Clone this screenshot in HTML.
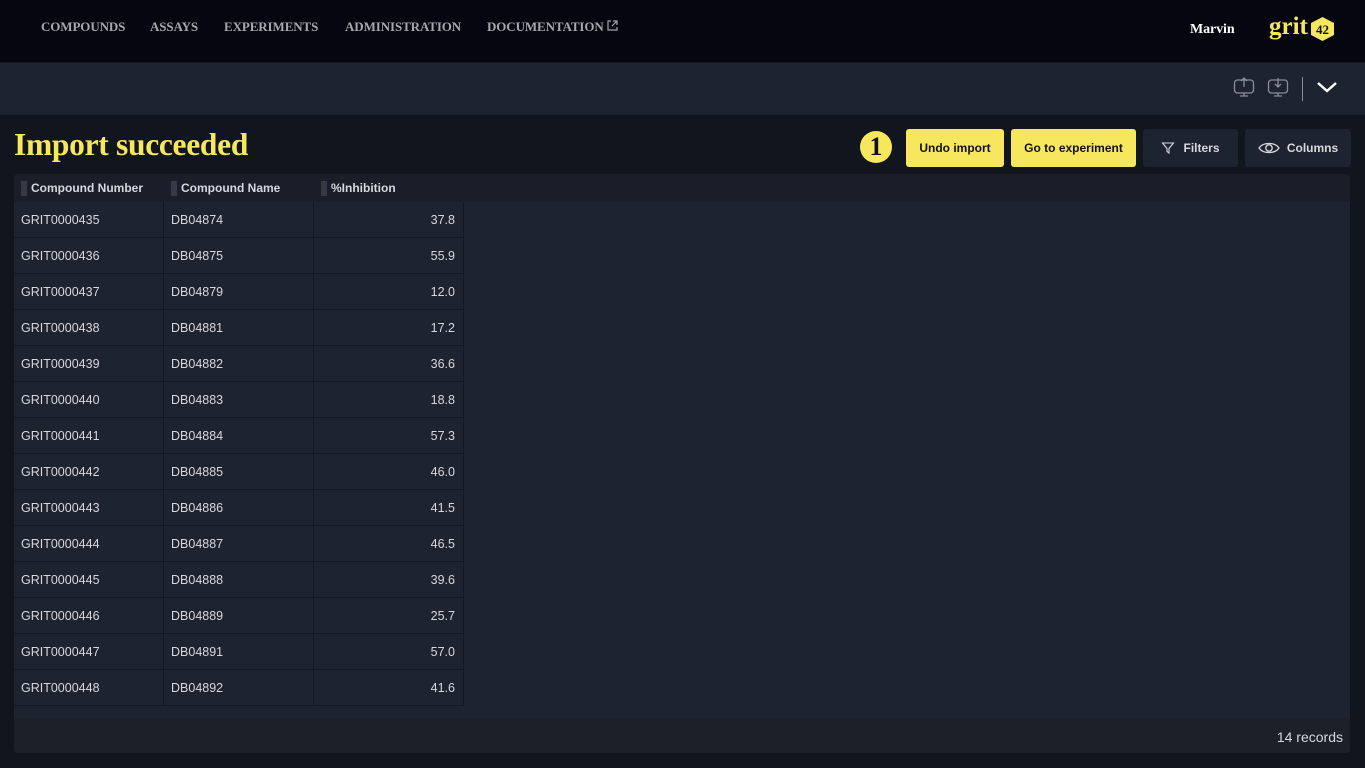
<!DOCTYPE html><html><head><style>
*{box-sizing:border-box;margin:0;padding:0}
body{width:1365px;height:768px;background:#11151d;font-family:"Liberation Sans",sans-serif;overflow:hidden;position:relative}
.top{position:absolute;left:0;top:0;width:1365px;height:62px;background:#05060f}
.nav{position:absolute;top:19px;font-family:"Liberation Serif",serif;font-weight:bold;font-size:13px;color:#a8a8ac;letter-spacing:-0.1px}
.tb{position:absolute;left:0;top:63px;width:1365px;height:52px;background:#1e2330}
.title{position:absolute;left:14px;top:127px;font-family:"Liberation Serif",serif;font-weight:bold;font-size:31.5px;color:#f7e75e;letter-spacing:-0.3px}
.btn{position:absolute;top:129px;height:38px;border-radius:3px;font-size:12px;font-weight:bold;display:flex;align-items:center;justify-content:center}
.y{background:#f7e75e;color:#111}
.d{background:#1e2330;color:#d8d8dc}
.tbl{position:absolute;left:14px;top:174px;width:1336px;height:579px;background:#1e2330;border-radius:4px;overflow:hidden}
.foot{position:absolute;left:0;top:544px;width:1336px;height:35px;background:#1c2029;color:#d8d8dc;font-size:14px;text-align:right;padding:11px 7px 0 0}
.hd{position:absolute;top:0;height:28px;font-size:12px;font-weight:bold;color:#d8d8dc;line-height:28px;padding-left:17px}
.hd:before{content:"";position:absolute;left:7px;top:7px;width:6px;height:15px;background:#353a47}
.row{position:absolute;left:0;width:450px;height:36px;border-bottom:1px solid #141820;font-size:12.5px;color:#d8d8dc;line-height:36px}
.row span{position:absolute;top:0;height:36px;border-right:1px solid #141820}
</style></head><body>
<div class="top"></div>
<div class="nav" style="left:41px">COMPOUNDS</div>
<div class="nav" style="left:150px">ASSAYS</div>
<div class="nav" style="left:224px">EXPERIMENTS</div>
<div class="nav" style="left:345px">ADMINISTRATION</div>
<div class="nav" style="left:487px">DOCUMENTATION <svg width="11" height="11" viewBox="0 0 11 11" style="vertical-align:0"><path d="M4 1H1v9h9V7M6 1h4v4M10 1L5 6" stroke="#a8a8ac" fill="none" stroke-width="1.2"/></svg></div>
<div class="nav" style="left:1190px;top:22px;color:#fff;font-size:14px">Marvin</div>
<div style="position:absolute;left:1269px;top:13px;font-family:'Liberation Serif',serif;font-weight:bold;font-size:25px;color:#f7e75e">grit</div>
<svg style="position:absolute;left:1310px;top:16px" width="25" height="26" viewBox="0 0 25 26"><polygon points="12.5,1 24,7 24,19 12.5,25 1,19 1,7" fill="#f7e75e"/><text x="12.5" y="18" font-family="Liberation Serif" font-weight="bold" font-size="13" text-anchor="middle" fill="#111">42</text></svg>
<div class="tb"></div>
<svg style="position:absolute;left:1233px;top:76px" width="22" height="22" viewBox="0 0 22 22" fill="none" stroke="#8a8d95" stroke-width="1.3"><rect x="1.5" y="4" width="19" height="13" rx="3"/><path d="M11 2v9M8 5l3-3 3 3M11 17v3M7 20h8"/></svg>
<svg style="position:absolute;left:1267px;top:76px" width="22" height="22" viewBox="0 0 22 22" fill="none" stroke="#8a8d95" stroke-width="1.3"><rect x="1.5" y="4" width="19" height="13" rx="3"/><path d="M11 2v9M8 8l3 3 3-3M11 17v3M7 20h8"/></svg>
<div style="position:absolute;left:1302px;top:77px;width:1px;height:24px;background:#8a8d95"></div>
<svg style="position:absolute;left:1316px;top:80px" width="22" height="14" viewBox="0 0 22 14"><path d="M2 3l9 8 9-8" stroke="#fff" stroke-width="2.5" fill="none"/></svg>
<div class="title">Import succeeded</div>
<div style="position:absolute;left:860px;top:131px;width:32px;height:32px;border-radius:50%;background:#f7e75e;color:#111;font-family:'Liberation Serif',serif;font-weight:bold;font-size:26px;text-align:center;line-height:32px">1</div>
<div class="btn y" style="left:906px;width:98px">Undo import</div>
<div class="btn y" style="left:1011px;width:125px">Go to experiment</div>
<div class="btn d" style="left:1143px;width:95px"><svg width="14" height="14" viewBox="0 0 14 14" style="margin-right:8px"><path d="M1.5 2h11L8 7.5V12L6 10.5V7.5z" stroke="#d8d8dc" fill="none" stroke-width="1.1"/></svg>Filters</div>
<div class="btn d" style="left:1245px;width:106px"><svg width="22" height="14" viewBox="0 0 22 14" style="margin-right:7px"><path d="M1 7C5 1 17 1 21 7C17 13 5 13 1 7Z" stroke="#d8d8dc" fill="none" stroke-width="1.3"/><circle cx="11" cy="7" r="3.2" stroke="#d8d8dc" fill="none" stroke-width="1.3"/></svg>Columns</div>
<div class="tbl">
<div style="position:absolute;left:0;top:0;width:1336px;height:28px;background:#1a1e28"></div>
<div class="hd" style="left:0">Compound Number</div>
<div class="hd" style="left:150px">Compound Name</div>
<div class="hd" style="left:300px">%Inhibition</div>
<div id="rows"></div>
<div class="foot">14 records</div>
</div>
<script>
var d=[["0435","04874","37.8"],["0436","04875","55.9"],["0437","04879","12.0"],["0438","04881","17.2"],["0439","04882","36.6"],["0440","04883","18.8"],["0441","04884","57.3"],["0442","04885","46.0"],["0443","04886","41.5"],["0444","04887","46.5"],["0445","04888","39.6"],["0446","04889","25.7"],["0447","04891","57.0"],["0448","04892","41.6"]];
var h="";d.forEach(function(r,i){h+='<div class="row" style="top:'+(28+i*36)+'px"><span style="left:0;width:150px;padding-left:7px">GRIT000'+r[0]+'</span><span style="left:150px;width:150px;padding-left:7px">DB'+r[1]+'</span><span style="left:300px;width:150px;text-align:right;padding-right:8px">'+r[2]+'</span></div>'});
document.getElementById("rows").innerHTML=h;
</script>
</body></html>
